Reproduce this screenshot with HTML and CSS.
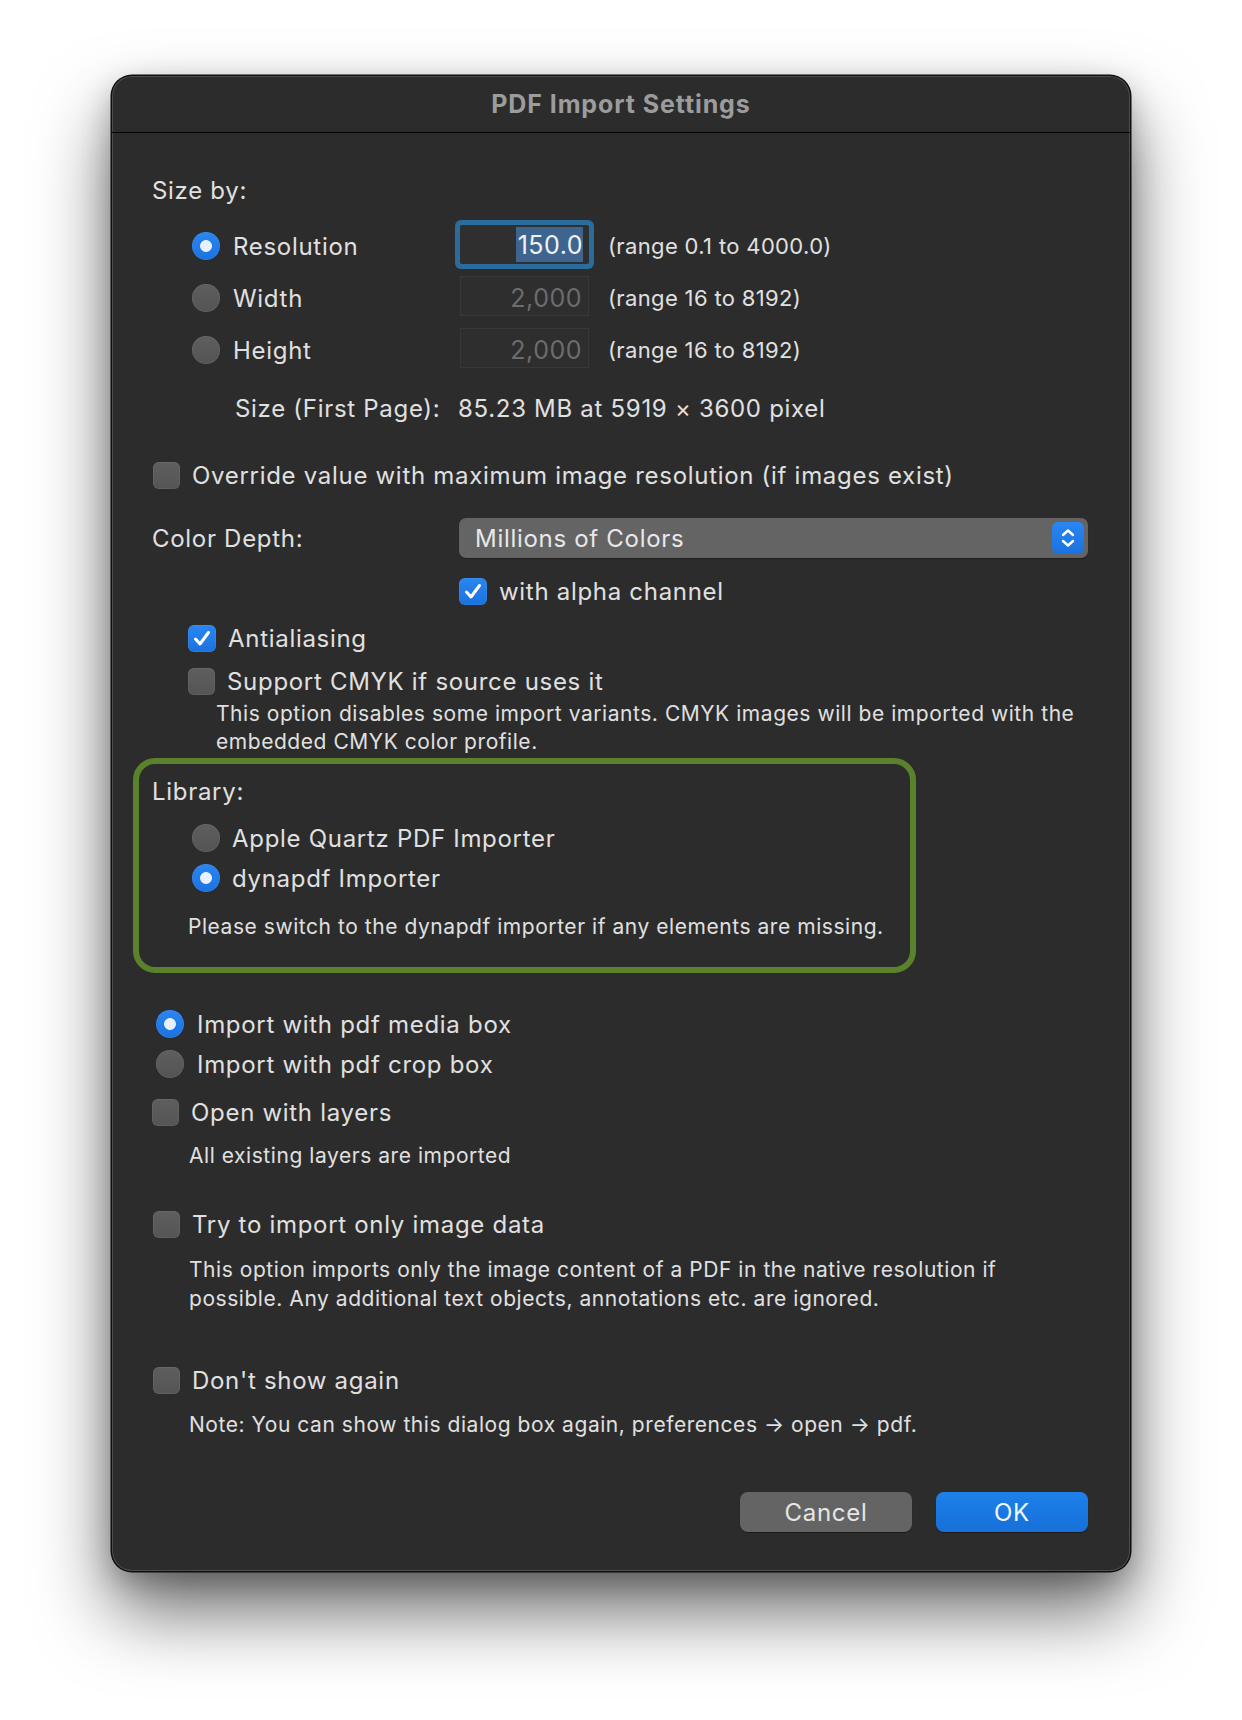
FILE: index.html
```html
<!DOCTYPE html>
<html>
<head>
<meta charset="utf-8">
<link rel="stylesheet" href="styles.css">
</head>
<body>
<div class="window">
  <div class="titlebar">PDF Import Settings</div>
  <div class="content">
    <div class="heading">Size by:</div>

    <div class="size-row first">
      <span class="radio on"></span>
      <span class="size-label">Resolution</span>
      <span class="field focused"><span class="sel">150.0</span></span>
      <span class="range">(range 0.1 to 4000.0)</span>
    </div>
    <div class="size-row">
      <span class="radio"></span>
      <span class="size-label">Width</span>
      <span class="field disabled">2,000</span>
      <span class="range">(range 16 to 8192)</span>
    </div>
    <div class="size-row">
      <span class="radio"></span>
      <span class="size-label">Height</span>
      <span class="field disabled">2,000</span>
      <span class="range">(range 16 to 8192)</span>
    </div>

    <div class="info-row">
      <span class="info-label">Size (First Page):</span>
      <span>85.23 MB at 5919 × 3600 pixel</span>
    </div>

    <div class="opt-row override">
      <span class="checkbox"></span>
      <span>Override value with maximum image resolution (if images exist)</span>
    </div>

    <div class="depth-row">
      <span class="depth-label">Color Depth:</span>
      <div class="popup">
        <span>Millions of Colors</span>
        <span class="stepper">
          <svg width="32" height="32" viewBox="0 0 32 32"><path d="M11 13 L16 8.5 L21 13 M11 19 L16 23.5 L21 19" fill="none" stroke="#fff" stroke-width="2.4" stroke-linecap="round" stroke-linejoin="round"/></svg>
        </span>
      </div>
    </div>

    <div class="opt-row alpha">
      <span class="checkbox on"><svg width="28" height="27" viewBox="0 0 28 27"><path d="M7.5 14 L12 19 L20.5 7.5" fill="none" stroke="#fff" stroke-width="3" stroke-linecap="round" stroke-linejoin="round"/></svg></span>
      <span>with alpha channel</span>
    </div>

    <div class="opt-row aa">
      <span class="checkbox on"><svg width="28" height="27" viewBox="0 0 28 27"><path d="M7.5 14 L12 19 L20.5 7.5" fill="none" stroke="#fff" stroke-width="3" stroke-linecap="round" stroke-linejoin="round"/></svg></span>
      <span>Antialiasing</span>
    </div>
    <div class="opt-row cmyk">
      <span class="checkbox"></span>
      <span>Support CMYK if source uses it</span>
    </div>
    <div class="desc cmyk-desc">This option disables some import variants. CMYK images will be imported with the embedded CMYK color profile.</div>

    <div class="library">
      <div class="lib-title">Library:</div>
      <div class="lib-row first">
        <span class="radio"></span>
        <span>Apple Quartz PDF Importer</span>
      </div>
      <div class="lib-row">
        <span class="radio on"></span>
        <span>dynapdf Importer</span>
      </div>
      <div class="lib-note">Please switch to the dynapdf importer if any elements are missing.</div>
    </div>

    <div class="box-row first">
      <span class="radio on"></span>
      <span>Import with pdf media box</span>
    </div>
    <div class="box-row">
      <span class="radio"></span>
      <span>Import with pdf crop box</span>
    </div>

    <div class="opt-row layers">
      <span class="checkbox"></span>
      <span>Open with layers</span>
    </div>
    <div class="note layers-note">All existing layers are imported</div>

    <div class="opt-row imgonly">
      <span class="checkbox"></span>
      <span>Try to import only image data</span>
    </div>
    <div class="desc imgonly-desc">This option imports only the image content of a PDF in the native resolution if possible. Any additional text objects, annotations etc. are ignored.</div>

    <div class="opt-row dontshow">
      <span class="checkbox"></span>
      <span>Don't show again</span>
    </div>
    <div class="note dontshow-note">Note: You can show this dialog box again, preferences → open → pdf.</div>

    <div class="buttons">
      <span class="btn cancel">Cancel</span>
      <span class="btn ok">OK</span>
    </div>
  </div>
</div>
</body>
</html>
```

FILE: styles.css
```css
html, body {
  margin: 0;
  padding: 0;
}
body {
  width: 1242px;
  height: 1720px;
  overflow: hidden;
  background: #ffffff;
  font-family: Inter, "Noto Sans", "Liberation Sans", sans-serif;
  color: #e0e0e0;
}
.window {
  width: 1018px;
  height: 1495px;
  margin: 76px 0 0 112px;
  background: #2c2c2c;
  border-radius: 20px;
  box-shadow:
    inset 0 0 0 1px rgba(255,255,255,0.16),
    0 0 0 1.5px #0e0e0e,
    0 40px 75px rgba(0,0,0,0.58),
    0 10px 30px rgba(0,0,0,0.25);
  overflow: hidden;
}
.titlebar {
  height: 56px;
  line-height: 56px;
  border-bottom: 1px solid #000;
  text-align: center;
  font-weight: 700;
  font-size: 25px;
  color: #9c9c9c;
  letter-spacing: 0.9px;
}
.content {
  padding: 0 42px 0 40px;
  font-size: 24px;
  letter-spacing: 0.7px;
}
.heading {
  margin-top: 43px;
  height: 30px;
  line-height: 30px;
}

/* radios */
.radio {
  flex: none;
  width: 28px;
  height: 28px;
  border-radius: 50%;
  box-sizing: border-box;
  background: linear-gradient(#5e5e5e, #545454);
  box-shadow: inset 0 0 0 0.5px rgba(255,255,255,0.12);
}
.radio.on {
  background: radial-gradient(circle at 50% 50%, #e8f1ff 0 5.5px, transparent 6.3px), linear-gradient(#2a86f2, #1b72de);
}

/* checkboxes */
.checkbox {
  flex: none;
  width: 27px;
  height: 27px;
  border-radius: 6px;
  box-sizing: border-box;
  background: linear-gradient(#5e5e5e, #555555);
  box-shadow: inset 0 0 0 0.5px rgba(255,255,255,0.12);
  display: flex;
}
.checkbox.on {
  width: 28px;
  background: linear-gradient(#2a86f2, #1b72de);
}

/* size rows */
.size-row {
  margin-left: 40px;
  height: 52px;
  display: flex;
  align-items: center;
}
.size-row.first { margin-top: 14px; }
.size-label {
  margin-left: 13px;
  width: 227px;
}
.field {
  width: 129px;
  height: 40px;
  box-sizing: border-box;
  margin-bottom: 4px;
  display: flex;
  align-items: center;
  justify-content: flex-end;
  padding-right: 6px;
  padding-top: 3px;
  font-size: 25px;
  letter-spacing: 0.5px;
}
.field.focused {
  height: 39px;
  padding-top: 0;
  background: #2f2f2f;
  border-radius: 2px;
  box-shadow: 0 0 0 5px #2a6c9b;
  color: #f2f2f2;
}
.field.focused .sel {
  background: #3e6590;
  padding: 3px 0 1px 2px;
  line-height: 31px;
}
.field.disabled {
  background: #2e2e2e;
  border: 1px solid #383838;
  color: #6c6c6c;
}
.range {
  margin-left: 19px;
  font-size: 22px;
  letter-spacing: 0.35px;
}

.info-row {
  margin-top: 12px;
  height: 40px;
  display: flex;
  align-items: center;
  padding-left: 83px;
}
.info-label { width: 223px; }

/* option rows */
.opt-row {
  display: flex;
  align-items: center;
  gap: 12px;
  height: 40px;
}
.override { margin-top: 27px; padding-left: 1px; }
.alpha { margin-top: 16px; height: 34px; padding-left: 307px; }
.aa { margin-top: 13px; height: 34px; padding-left: 36px; }
.cmyk { margin-top: 9px; height: 34px; padding-left: 36px; }
.layers { margin-top: 8px; }
.imgonly { margin-top: 33px; padding-left: 1px; }
.dontshow { margin-top: 47px; padding-left: 1px; }

.depth-row {
  margin-top: 23px;
  height: 40px;
  display: flex;
  align-items: center;
}
.depth-label { width: 307px; }
.popup {
  width: 629px;
  height: 40px;
  box-sizing: border-box;
  background: #646464;
  border-radius: 7px;
  display: flex;
  align-items: center;
  justify-content: space-between;
  padding: 0 4px 0 16px;
  color: #e8e8e8;
  box-shadow: 0 1px 1px rgba(0,0,0,0.35);
}
.stepper {
  width: 32px;
  height: 32px;
  border-radius: 6px;
  background: linear-gradient(#2a86f2, #1b72de);
  display: flex;
}

.desc {
  font-size: 21px;
  letter-spacing: 0.55px;
}
.cmyk-desc {
  margin-top: 2px;
  padding-left: 64px;
  line-height: 28px;
}
.imgonly-desc {
  margin-top: 11px;
  padding-left: 37px;
  line-height: 29px;
  padding-right: 60px;
}
.note {
  font-size: 21px;
  letter-spacing: 0.55px;
  height: 30px;
  line-height: 30px;
  padding-left: 37px;
}
.layers-note { margin-top: 9px; }
.dontshow-note { margin-top: 10px; }

/* library box */
.library {
  margin-top: 2px;
  margin-left: -19px;
  width: 783px;
  box-sizing: border-box;
  border: 6px solid #5a822d;
  border-radius: 22px;
  padding: 13px 0 25px 13px;
}
.lib-title {
  height: 30px;
  line-height: 30px;
}
.lib-row {
  height: 40px;
  display: flex;
  align-items: center;
  gap: 12px;
  padding-left: 40px;
}
.lib-row.first { margin-top: 11px; }
.lib-note {
  margin-top: 14px;
  height: 30px;
  line-height: 30px;
  padding-left: 36px;
  font-size: 21px;
  letter-spacing: 0.55px;
}

.box-row {
  height: 40px;
  display: flex;
  align-items: center;
  gap: 13px;
  padding-left: 4px;
}
.box-row.first { margin-top: 31px; }

/* buttons */
.buttons {
  margin-top: 52px;
  display: flex;
  justify-content: flex-end;
  gap: 24px;
}
.btn {
  height: 40px;
  border-radius: 8px;
  display: flex;
  align-items: center;
  justify-content: center;
  font-size: 24px;
  color: #e6e6e6;
  box-shadow: 0 1px 1px rgba(0,0,0,0.4);
}
.cancel {
  width: 172px;
  background: #646464;
}
.ok {
  width: 152px;
  background: linear-gradient(#1e80ea, #1670d8);
  color: #f4f8ff;
}
```
